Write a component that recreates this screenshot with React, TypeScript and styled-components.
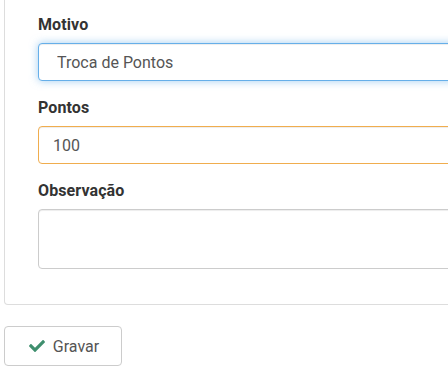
import React from "react";
import styled, { createGlobalStyle } from "styled-components";
import { FaCheck } from "react-icons/fa";

const GlobalStyle = createGlobalStyle`
  html, body {
    margin: 0;
    padding: 0;
    background: #fff;
    overflow: hidden;
  }
  body {
    font-family: Roboto, "Liberation Sans", sans-serif;
    color: #333;
  }
`;

const Page = styled.div`
  width: 448px;
  height: 373px;
  overflow: hidden;
  padding-left: 4px;
  box-sizing: border-box;
`;

const Panel = styled.div`
  width: 540px;
  box-sizing: border-box;
  border: 1px solid #ddd;
  border-top: none;
  border-radius: 0 0 4px 4px;
  padding: 15px 40px 35px 33px;
`;

const FormGroup = styled.div`
  display: flex;
  flex-direction: column;
  & + & {
    margin-top: 17px;
  }
`;

const Label = styled.label`
  font-size: 16px;
  font-weight: 700;
  line-height: 20px;
  letter-spacing: 0.1px;
  color: #333;
  margin-bottom: 8px;
`;

const fieldBase = `
  width: 100%;
  box-sizing: border-box;
  font-family: Roboto, "Liberation Sans", sans-serif;
  font-size: 16px;
  color: #555;
  background: #fff;
  border: 1px solid #ccc;
  border-radius: 4px;
  outline: none;
  margin: 0;
`;

const Select = styled.select`
  ${fieldBase}
  appearance: none;
  height: 38px;
  padding: 0 18px;
  border-color: #66afe9;
  box-shadow: inset 0 1px 1px rgba(0, 0, 0, 0.075),
    0 0 8px rgba(102, 175, 233, 0.6);
`;

const Input = styled.input<{ $warning?: boolean }>`
  ${fieldBase}
  height: 38px;
  padding: 0 14px;
  border-color: ${({ $warning }) => ($warning ? "#f0ad4e" : "#ccc")};
  box-shadow: inset 0 1px 1px rgba(0, 0, 0, 0.075);
`;

const TextArea = styled.textarea`
  ${fieldBase}
  height: 60px;
  padding: 8px 14px;
  resize: none;
  box-shadow: inset 0 1px 1px rgba(0, 0, 0, 0.075);
`;

const Actions = styled.div`
  margin-top: 21px;
`;

const Button = styled.button`
  display: inline-flex;
  align-items: center;
  justify-content: center;
  gap: 8px;
  width: 118px;
  height: 40px;
  box-sizing: border-box;
  background: #fff;
  border: 1px solid #ccc;
  border-radius: 4px;
  font-family: Roboto, "Liberation Sans", sans-serif;
  font-size: 16px;
  color: #555;
  padding: 0 0 0 2px;
  cursor: pointer;

  svg {
    color: #3f8f6e;
    font-size: 16px;
  }
`;

export default function App() {
  return (
    <Page>
      <GlobalStyle />
      <Panel>
        <FormGroup>
          <Label>Motivo</Label>
          <Select defaultValue="troca">
            <option value="troca">Troca de Pontos</option>
          </Select>
        </FormGroup>
        <FormGroup>
          <Label>Pontos</Label>
          <Input $warning defaultValue="100" />
        </FormGroup>
        <FormGroup>
          <Label>Observação</Label>
          <TextArea />
        </FormGroup>
      </Panel>
      <Actions>
        <Button>
          <FaCheck />
          Gravar
        </Button>
      </Actions>
    </Page>
  );
}
